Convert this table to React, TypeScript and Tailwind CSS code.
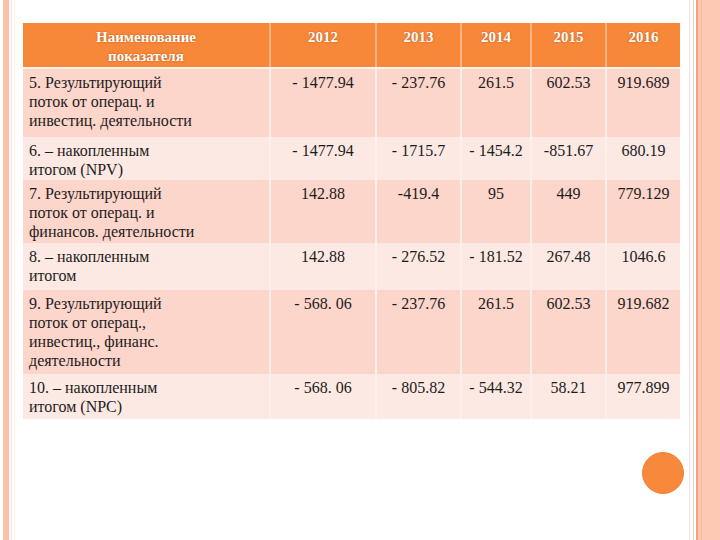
import React from "react";

const years = ["2012", "2013", "2014", "2015", "2016"];

type Row = { label: string[]; values: string[]; h: string; dark: boolean };

const rows: Row[] = [
  {
    label: ["5. Результирующий", "поток от операц. и", "инвестиц. деятельности"],
    values: ["- 1477.94", "- 237.76", "261.5", "602.53", "919.689"],
    h: "h-[68px]",
    dark: true,
  },
  {
    label: ["6. – накопленным", "итогом (NPV)"],
    values: ["- 1477.94", "- 1715.7", "- 1454.2", "-851.67", "680.19"],
    h: "h-[43px]",
    dark: false,
  },
  {
    label: ["7. Результирующий", "поток от операц. и", "финансов. деятельности"],
    values: ["142.88", "-419.4", "95", "449", "779.129"],
    h: "h-[63px]",
    dark: true,
  },
  {
    label: ["8. – накопленным", "итогом"],
    values: ["142.88", "- 276.52", "- 181.52", "267.48", "1046.6"],
    h: "h-[47px]",
    dark: false,
  },
  {
    label: ["9. Результирующий", "поток от операц.,", "инвестиц., финанс.", "деятельности"],
    values: ["- 568. 06", "- 237.76", "261.5", "602.53", "919.682"],
    h: "h-[84px]",
    dark: true,
  },
  {
    label: ["10. – накопленным", "итогом (NPC)"],
    values: ["- 568. 06", "- 805.82", "- 544.32", "58.21", "977.899"],
    h: "h-[45px]",
    dark: false,
  },
];

export default function App() {
  return (
    <div className="flex h-[540px] w-[720px] bg-white font-['Liberation_Serif','Times_New_Roman',serif] text-[#1c1c1c]">
      {/* left slide decoration */}
      <div className="flex h-full">
        <div className="w-[3px]" />
        <div className="w-[6px] bg-[#fdc1a8]" />
        <div className="w-[2px]" />
        <div className="w-[1px] bg-[#fde3d9]" />
        <div className="w-[2px]" />
        <div className="w-[1px] bg-[#fdf3dc]" />
      </div>

      {/* content */}
      <div className="flex flex-1 flex-col pl-[8px] pt-[23px]">
        <div className="w-[657px]">
          <div className="grid h-[44px] grid-cols-[246px_106px_85px_70px_75px_75px] bg-[#f7883a] font-['Liberation_Serif',serif] text-[15px] font-bold leading-[19px] text-white [text-shadow:0_0_2px_rgba(120,50,0,0.55)]">
            <div className="pt-[5px] text-center">
              Наименование
              <br />
              показателя
            </div>
            {years.map((y) => (
              <div key={y} className="border-l-2 border-[#fbb486] pt-[5px] text-center">
                {y}
              </div>
            ))}
          </div>
          <div className="h-[2px] bg-[#fff2ea]" />
          {rows.map((r, i) => (
            <div
              key={i}
              className={`grid grid-cols-[246px_106px_85px_70px_75px_75px] font-['Liberation_Serif',serif] text-[16px] leading-[19px] ${r.h} ${
                r.dark ? "bg-[#fcd5cb]" : "bg-[#fde9e3]"
              }`}
            >
              <div className="pl-[6px] pt-[4px]">
                {r.label.map((l, j) => (
                  <div key={j}>{l}</div>
                ))}
              </div>
              {r.values.map((v, j) => (
                <div key={j} className="border-l-2 border-[#fdf0ea] pt-[4px] text-center">
                  {v}
                </div>
              ))}
            </div>
          ))}
        </div>
        <div className="mt-[33px] flex justify-end pr-[5px]">
          <div className="h-[42px] w-[42px] rounded-full border border-[#e9843f] bg-[#f8883a]" />
        </div>
      </div>

      {/* right slide decoration */}
      <div className="flex h-full">
        <div className="w-[1px] bg-[#f3ddd1]" />
        <div className="w-[3px]" />
        <div className="w-[1px] bg-[#ecccbc]" />
        <div className="w-[2px]" />
        <div className="w-[2px] bg-[#f2a07f]" />
        <div className="w-[3px] bg-[#fcc7b2]" />
        <div className="w-[1px] bg-[#f8b89f]" />
        <div className="w-[18px] bg-[#fdc9b5]" />
      </div>
    </div>
  );
}
